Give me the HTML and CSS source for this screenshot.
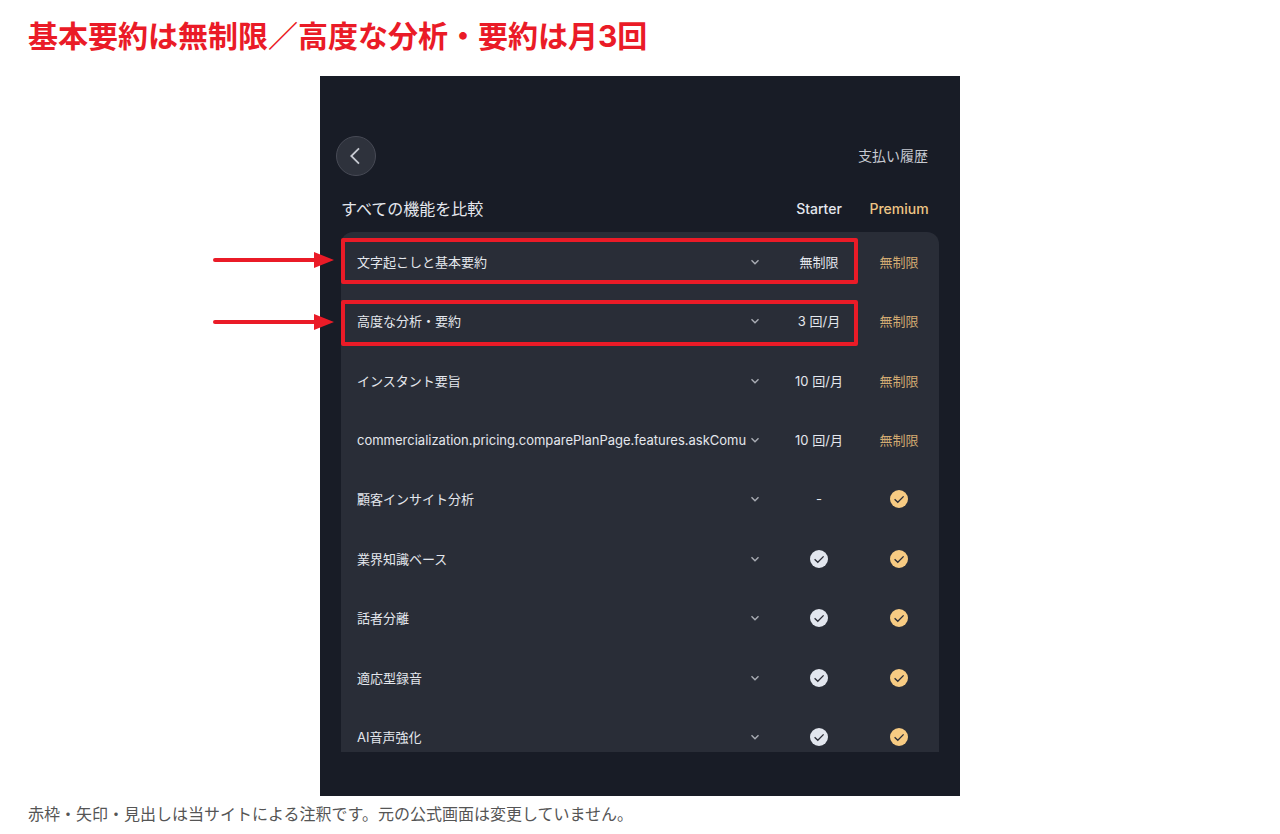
FILE: index.html
```html
<!DOCTYPE html>
<html lang="ja">
<head>
    <meta charset="UTF-8">
    <meta name="viewport" content="width=device-width, initial-scale=1.0">

    <title>基本要約は無制限／高度な分析・要約は月3回</title>
    <link rel="stylesheet" href="styles.css">
</head>
<body>
    <!-- Shared icons -->
    <svg class="sprite" aria-hidden="true">
        <symbol id="chevron" viewBox="0 0 16 16">
            <path d="M4.5 6.3 8 9.8l3.5-3.5" fill="none" stroke="currentColor" stroke-width="1.4"/>
        </symbol>
        <symbol id="check" viewBox="0 0 18 18">
            <circle cx="9" cy="9" r="9" fill="currentColor"/>
            <path d="M4.6 9.2 7.8 12.3 13.6 6.4" fill="none" stroke="#2b2d37" stroke-width="1.3"/>
        </symbol>
        <symbol id="arrow" viewBox="0 0 122 16">
            <path d="M2 8h102" stroke="currentColor" stroke-width="4" stroke-linecap="round"/>
            <path d="M101 0 121 8 101 16z" fill="currentColor"/>
        </symbol>
    </svg>

    <header>
        <h1>基本要約は無制限／高度な分析・要約は月3回</h1>
    </header>

    <main class="screen">
        <nav class="topbar">
            <button type="button" class="back-btn" aria-label="戻る">
                <svg viewBox="0 0 20 20"><path d="M13 2.3 5.3 10l7.7 7.7" fill="none" stroke="currentColor" stroke-width="1.8"/></svg>
            </button>
            <a href="#">支払い履歴</a>
        </nav>

        <div class="plans">
            <table>
                <thead>
                    <tr><th scope="col">すべての機能を比較</th><th scope="col" class="plan">Starter</th><th scope="col" class="plan premium">Premium</th></tr>
                </thead>
                <tbody>
                    <tr>
                        <th scope="row"><div class="feature"><span>文字起こしと基本要約</span><button type="button" aria-label="詳細"><svg><use href="#chevron"/></svg></button></div></th>
                        <td>無制限</td>
                        <td class="premium">無制限</td>
                    </tr>
                    <tr>
                        <th scope="row"><div class="feature"><span>高度な分析・要約</span><button type="button" aria-label="詳細"><svg><use href="#chevron"/></svg></button></div></th>
                        <td>3 回/月</td>
                        <td class="premium">無制限</td>
                    </tr>
                    <tr>
                        <th scope="row"><div class="feature"><span>インスタント要旨</span><button type="button" aria-label="詳細"><svg><use href="#chevron"/></svg></button></div></th>
                        <td>10 回/月</td>
                        <td class="premium">無制限</td>
                    </tr>
                    <tr>
                        <th scope="row"><div class="feature"><span>commercialization.pricing.comparePlanPage.features.askComu</span><button type="button" aria-label="詳細"><svg><use href="#chevron"/></svg></button></div></th>
                        <td>10 回/月</td>
                        <td class="premium">無制限</td>
                    </tr>
                    <tr>
                        <th scope="row"><div class="feature"><span>顧客インサイト分析</span><button type="button" aria-label="詳細"><svg><use href="#chevron"/></svg></button></div></th>
                        <td>-</td>
                        <td class="premium"><svg class="check" role="img" aria-label="対応"><use href="#check"/></svg></td>
                    </tr>
                    <tr>
                        <th scope="row"><div class="feature"><span>業界知識ベース</span><button type="button" aria-label="詳細"><svg><use href="#chevron"/></svg></button></div></th>
                        <td><svg class="check" role="img" aria-label="対応"><use href="#check"/></svg></td>
                        <td class="premium"><svg class="check" role="img" aria-label="対応"><use href="#check"/></svg></td>
                    </tr>
                    <tr>
                        <th scope="row"><div class="feature"><span>話者分離</span><button type="button" aria-label="詳細"><svg><use href="#chevron"/></svg></button></div></th>
                        <td><svg class="check" role="img" aria-label="対応"><use href="#check"/></svg></td>
                        <td class="premium"><svg class="check" role="img" aria-label="対応"><use href="#check"/></svg></td>
                    </tr>
                    <tr>
                        <th scope="row"><div class="feature"><span>適応型録音</span><button type="button" aria-label="詳細"><svg><use href="#chevron"/></svg></button></div></th>
                        <td><svg class="check" role="img" aria-label="対応"><use href="#check"/></svg></td>
                        <td class="premium"><svg class="check" role="img" aria-label="対応"><use href="#check"/></svg></td>
                    </tr>
                    <tr>
                        <th scope="row"><div class="feature"><span>AI音声強化</span><button type="button" aria-label="詳細"><svg><use href="#chevron"/></svg></button></div></th>
                        <td><svg class="check" role="img" aria-label="対応"><use href="#check"/></svg></td>
                        <td class="premium"><svg class="check" role="img" aria-label="対応"><use href="#check"/></svg></td>
                    </tr>
                </tbody>
            </table>
        </div>

        <!-- Red frames and arrows over the first two rows -->
        <div class="mark mark-basic"><svg><use href="#arrow"/></svg></div>
        <div class="mark mark-advanced"><svg><use href="#arrow"/></svg></div>
    </main>

    <footer>
        <p>赤枠・矢印・見出しは当サイトによる注釈です。元の公式画面は変更していません。</p>
    </footer>
</body>
</html>
```

FILE: styles.css
```css
body {
    font-family: Inter, "Noto Sans CJK JP", sans-serif;
    background-color: #fff;
    margin: 0;
}

.sprite {
    display: none;
}

header {
    padding: 16px 28px 20px;
}

h1 {
    margin: 0;
    color: #ea1b27;
    font-size: 30px;
    font-weight: 700;
    line-height: 40px;
}

.screen {
    position: relative;
    box-sizing: border-box;
    max-width: 640px;
    margin: 0 auto;
    padding: 60px 21px 44px;
    background-color: #181c26;
    color: #e4e7ed;
}

.topbar {
    display: flex;
    align-items: center;
    justify-content: space-between;
    margin: 0 11px 10px -5px;
}

.topbar a {
    color: #c6c9d1;
    font-size: 14px;
    line-height: 20px;
    text-decoration: none;
}

button {
    display: flex;
    align-items: center;
    justify-content: center;
    padding: 0;
    border: none;
    background: none;
    color: #a9acb4;
    cursor: pointer;
}

.back-btn {
    width: 40px;
    height: 40px;
    border: solid 1px #474a55;
    border-radius: 50%;
    background-color: #2e323c;
    color: #c6c9d1;
}

.back-btn svg {
    width: 20px;
    height: 20px;
}

/* The list is cut off at the bottom of the screen */
.plans {
    height: 566px;
    overflow: hidden;
}

table {
    width: 100%;
    height: 581px;
    table-layout: fixed;
    border-collapse: separate;
    border-spacing: 0;
}

th, td {
    padding: 0;
    font-size: 13px;
    font-weight: 400;
    line-height: 20px;
    text-align: center;
}

thead th {
    height: 46px;
    font-size: 16px;
    text-align: left;
}

thead .plan {
    width: 80px;
    font-size: 14px;
    font-weight: 500;
    text-align: center;
}

tbody th, tbody td {
    background-color: #292d37;
}

tbody tr:first-child th {
    border-top-left-radius: 12px;
}

tbody tr:first-child td:last-child {
    border-top-right-radius: 12px;
}

.feature {
    display: flex;
    align-items: center;
    padding: 0 16px;
}

.feature span {
    flex: 1;
    min-width: 0;
    white-space: nowrap;
    text-align: left;
}

.feature svg {
    width: 16px;
    height: 16px;
}

.premium {
    color: #d3ab72;
}

thead .premium {
    color: #edc585;
}

.check {
    display: block;
    width: 18px;
    height: 18px;
    margin: 0 auto;
    color: #e2e6ee;
}

.premium .check {
    color: #f7cb83;
}

.mark {
    position: absolute;
    left: 21px;
    right: 102px;
    box-sizing: border-box;
    height: 46px;
    border: solid 4px #ea1b27;
    border-radius: 2px;
    color: #ea1b27;
    pointer-events: none;
}

.mark-basic {
    top: 162px;
}

.mark-advanced {
    top: 224px;
}

.mark svg {
    position: absolute;
    top: 10px;
    right: 100%;
    width: 122px;
    height: 16px;
    margin-right: 10px;
}

footer {
    padding: 6px 28px 4px;
}

footer p {
    margin: 0;
    color: #555;
    font-size: 16px;
    line-height: 24px;
}
```
